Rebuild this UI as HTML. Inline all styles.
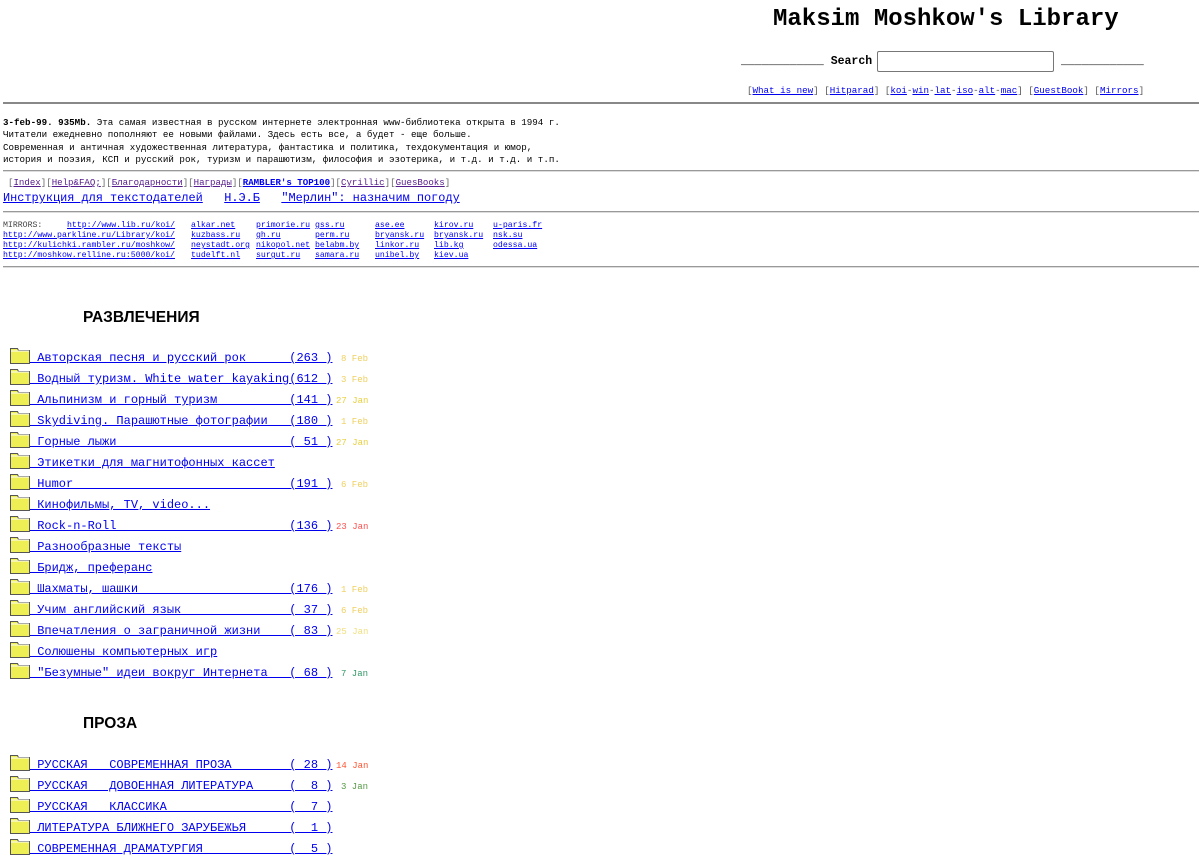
<!DOCTYPE html>
<html><head><meta charset="utf-8">
<style>
body{margin:0;background:#fff;width:1199px;height:847px;overflow:hidden;position:relative;font-family:"Liberation Mono",monospace;color:#000}
.a{position:absolute;white-space:pre}
a{color:#0000ee;text-decoration:underline}
.vis{color:#551a8b}
.hr{position:absolute;left:3px;width:1196px;height:1px;background:#999;border-bottom:1px solid #ddd}
.f{position:absolute;left:10px;width:20px;height:17px}
.row{position:absolute;left:30px;font-size:12px;white-space:pre}
.d{position:absolute;left:336px;font-size:9px;white-space:pre}
h2{position:absolute;left:83px;margin:0;font:bold 15.5px "Liberation Sans",sans-serif}
.m{position:absolute;font-size:8.2px;white-space:pre;line-height:10px}
</style></head><body>
<div class="a" style="left:773px;top:6px;font-size:24px;font-weight:bold">Maksim Moshkow's Library</div>
<div class="a" style="left:741px;top:55px;font-size:11.5px;font-weight:bold">____________ Search</div>
<div style="position:absolute;left:877px;top:51px;width:175px;height:19px;border:1px solid #777;border-radius:2px"></div>
<div class="a" style="left:1061px;top:55px;font-size:11.5px;font-weight:bold">____________</div>
<div class="a" style="left:747px;top:85px;font-size:9.2px;color:#555">[<a href="#">What is new</a>] [<a href="#">Hitparad</a>] [<a href="#">koi</a>-<a href="#">win</a>-<a href="#">lat</a>-<a href="#">iso</a>-<a href="#">alt</a>-<a href="#">mac</a>] [<a href="#">GuestBook</a>] [<a href="#">Mirrors</a>]</div>
<div style="position:absolute;left:3px;top:102px;width:1196px;height:2px;background:#888"></div>
<div class="a" style="left:3px;top:117px;font-size:9.2px;line-height:12.3px"><b>3-feb-99. 935Mb.</b> Эта самая известная в русском интернете электронная www-библиотека открыта в 1994 г.
Читатели ежедневно пополняют ее новыми файлами. Здесь есть все, а будет - еще больше.
Современная и античная художественная литература, фантастика и политика, техдокументация и юмор,
история и поэзия, КСП и русский рок, туризм и парашютизм, философия и эзотерика, и т.д. и т.д. и т.п.</div>
<div class="hr" style="top:170px"></div>
<div class="a" style="left:8px;top:177px;font-size:9.1px;color:#666">[<a class="vis" href="#">Index</a>][<a class="vis" href="#">Help&amp;FAQ;</a>][<a class="vis" href="#">Благодарности</a>][<a class="vis" href="#">Награды</a>][<a href="#"><b>RAMBLER's TOP100</b></a>][<a class="vis" href="#">Cyrillic</a>][<a class="vis" href="#">GuesBooks</a>]</div>
<div class="a" style="left:3px;top:191px;font-size:11.9px"><a href="#">Инструкция для текстодателей</a>   <a href="#">Н.Э.Б</a>   <a href="#">"Мерлин": назначим погоду</a></div>
<div class="hr" style="top:211px"></div>
<div class="m" style="left:3px;top:221px;color:#444">MIRRORS:</div>
<div class="m" style="left:67px;top:221px"><a href="#">http://www.lib.ru/koi/</a></div>
<div class="m" style="left:3px;top:231px"><a href="#">http://www.parkline.ru/Library/koi/</a>
<a href="#">http://kulichki.rambler.ru/moshkow/</a>
<a href="#">http://moshkow.relline.ru:5000/koi/</a></div>
<div class="m" style="left:191px;top:221px"><a href="#">alkar.net</a>
<a href="#">kuzbass.ru</a>
<a href="#">neystadt.org</a>
<a href="#">tudelft.nl</a></div>
<div class="m" style="left:256px;top:221px"><a href="#">primorie.ru</a>
<a href="#">gh.ru</a>
<a href="#">nikopol.net</a>
<a href="#">surgut.ru</a></div>
<div class="m" style="left:315px;top:221px"><a href="#">gss.ru</a>
<a href="#">perm.ru</a>
<a href="#">belabm.by</a>
<a href="#">samara.ru</a></div>
<div class="m" style="left:375px;top:221px"><a href="#">ase.ee</a>
<a href="#">bryansk.ru</a>
<a href="#">linkor.ru</a>
<a href="#">unibel.by</a></div>
<div class="m" style="left:434px;top:221px"><a href="#">kirov.ru</a>
<a href="#">bryansk.ru</a>
<a href="#">lib.kg</a>
<a href="#">kiev.ua</a></div>
<div class="m" style="left:493px;top:221px"><a href="#">u-paris.fr</a>
<a href="#">nsk.su</a>
<a href="#">odessa.ua</a></div>
<div class="hr" style="top:266px"></div>

<h2 style="top:309px">РАЗВЛЕЧЕНИЯ</h2>
<h2 style="top:715px">ПРОЗА</h2>

<div id="rows"></div>
<script>
var F='<svg width="20" height="17" viewBox="0 0 20 17"><path d="M0.5 3.5V1.5h7l1 2h11v13H0.5z" fill="#eeee55" stroke="#555" stroke-width="1"/><path d="M1 4h18" stroke="#fff"/></svg>';
var R=[
["Авторская песня и русский рок","263","8 Feb","#f0d060",358],
["Водный туризм. White water kayaking","612","3 Feb","#f0d060",379],
["Альпинизм и горный туризм","141","27 Jan","#e8d040",400],
["Skydiving. Парашютные фотографии","180","1 Feb","#f0d060",421],
["Горные лыжи"," 51","27 Jan","#e8d040",442],
["Этикетки для магнитофонных кассет","","","",463],
["Humor","191","6 Feb","#f0d060",484],
["Кинофильмы, TV, video...","","","",505],
["Rock-n-Roll","136","23 Jan","#ff5050",526],
["Разнообразные тексты","","","",547],
["Бридж, преферанс","","","",568],
["Шахматы, шашки","176","1 Feb","#f0d060",589],
["Учим английский язык"," 37","6 Feb","#f0d060",610],
["Впечатления о заграничной жизни"," 83","25 Jan","#f0e080",631],
["Солюшены компьютерных игр","","","",652],
["\"Безумные\" идеи вокруг Интернета"," 68","7 Jan","#339966",673],
["РУССКАЯ   СОВРЕМЕННАЯ ПРОЗА"," 28","14 Jan","#ff5533",765],
["РУССКАЯ   ДОВОЕННАЯ ЛИТЕРАТУРА","  8","3 Jan","#559944",786],
["РУССКАЯ   КЛАССИКА","  7","","",807],
["ЛИТЕРАТУРА БЛИЖНЕГО ЗАРУБЕЖЬЯ","  1","","",828],
["СОВРЕМЕННАЯ ДРАМАТУРГИЯ","  5","","",849]];
var h='';
R.forEach(function(r){
var y=r[4];
h+='<div class="f" style="top:'+(y-11)+'px">'+F+'</div>';
var t=' '+r[0];
if(r[1]!==''){while(t.length<36)t+=' ';t+='('+r[1]+' )';}
t=t.replace(/&/g,'&amp;').replace(/</g,'&lt;');
h+='<div class="row" style="top:'+(y-7)+'px"><a href="#">'+t+'</a></div>';
if(r[2]){var dl=r[2].length==5?341:336;h+='<div class="d" style="left:'+dl+'px;top:'+(y-4)+'px;color:'+r[3]+'">'+r[2]+'</div>';}
});
document.getElementById('rows').innerHTML=h;
</script>
</body></html>
